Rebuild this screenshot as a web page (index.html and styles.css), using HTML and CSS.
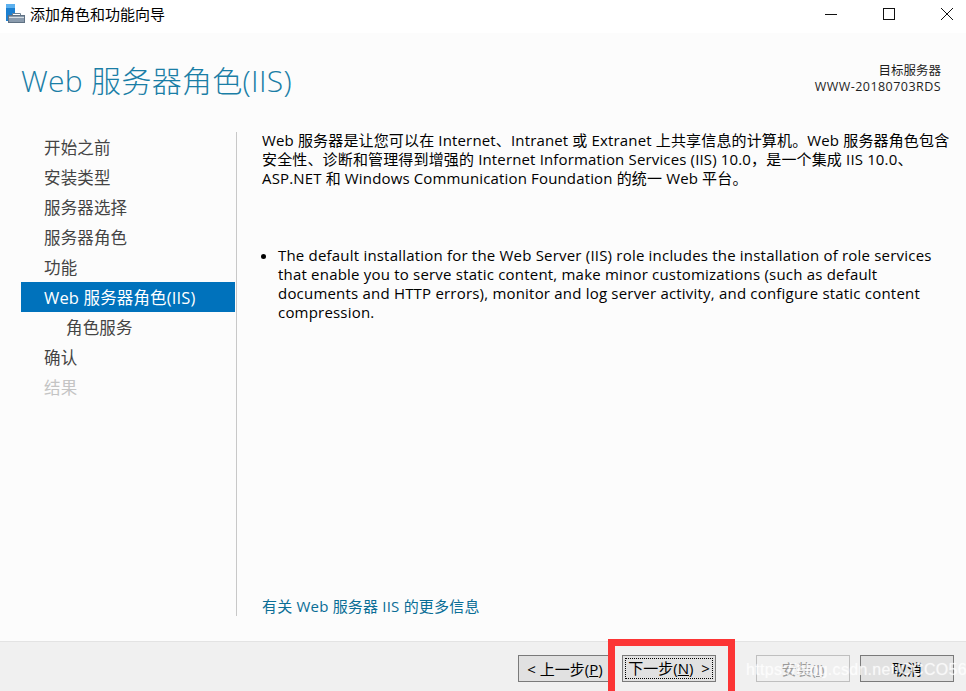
FILE: index.html
```html
<!DOCTYPE html>
<html lang="zh-CN">
<head>
    <meta charset="UTF-8">
    <title>添加角色和功能向导</title>
    <link rel="stylesheet" href="styles.css">
</head>
<body>
    <div class="window">
        <div class="titlebar">
            <svg class="app-icon" width="20" height="20" viewBox="0 0 20 20">
                <rect x="1" y="0" width="9" height="4" fill="#5cb0ee"/>
                <rect x="1" y="4" width="9" height="13" fill="#1b7fd0"/>
                <path d="M7.5 11.5v-2h8v2" fill="#ffffff" stroke="#6d8092"/>
                <rect x="3.5" y="11.5" width="16" height="7" fill="#8a9bad" stroke="#5f7183"/>
                <rect x="4" y="13" width="15" height="1" fill="#d5dce2"/>
            </svg>
            <span class="title-text">添加角色和功能向导</span>
            <div class="controls">
                <svg width="12" height="12" viewBox="0 0 12 12"><path d="M0 6.5h12" stroke="#111" fill="none"/></svg>
                <svg width="12" height="12" viewBox="0 0 12 12"><rect x="0.5" y="0.5" width="11" height="11" stroke="#111" fill="none"/></svg>
                <svg width="12" height="12" viewBox="0 0 12 12"><path d="M0 0L12 12M12 0L0 12" stroke="#111" fill="none"/></svg>
            </div>
        </div>

        <div class="header">
            <h1>Web 服务器角色(IIS)</h1>
            <div class="target">
                <div>目标服务器</div>
                <div class="server-name">WWW-20180703RDS</div>
            </div>
        </div>

        <div class="main">
            <ul class="nav">
                <li>开始之前</li>
                <li>安装类型</li>
                <li>服务器选择</li>
                <li>服务器角色</li>
                <li>功能</li>
                <li class="active">Web 服务器角色(IIS)</li>
                <li class="sub">角色服务</li>
                <li>确认</li>
                <li class="disabled">结果</li>
            </ul>
            <div class="content">
                <p class="intro">Web 服务器是让您可以在 Internet、Intranet 或 Extranet 上共享信息的计算机。Web 服务器角色包含安全性、诊断和管理得到增强的 Internet Information Services (IIS) 10.0，是一个集成 IIS 10.0、ASP.NET 和 Windows Communication Foundation 的统一 Web 平台。</p>
                <ul class="notes">
                    <li>The default installation for the Web Server (IIS) role includes the installation of role services that enable you to serve static content, make minor customizations (such as default documents and HTTP errors), monitor and log server activity, and configure static content compression.</li>
                </ul>
                <a class="more" href="#">有关 Web 服务器 IIS 的更多信息</a>
            </div>
        </div>

        <div class="footer">
            <button class="btn btn-prev">&lt; 上一步(<u>P</u>)</button>
            <button class="btn btn-next"><span class="focus">下一步(<u>N</u>) &nbsp;&gt;</span></button>
            <button class="btn btn-install" disabled>安装(<u>I</u>)</button>
            <button class="btn btn-cancel">取消</button>
        </div>
    </div>

    <div class="highlight"></div>
    <div class="watermark">https://blog.csdn.net/CCCO56</div>
</body>
</html>
```

FILE: styles.css
```css
:root {
    --accent: #0072bc;
    --heading: #1a7ea6;
    --link: #0a6e96;
    --text: #1e1e1e;
}

html, body {
    margin: 0;
    padding: 0;
}

body {
    width: 966px;
    height: 691px;
    overflow: hidden;
    position: relative;
    font-family: "Open Sans", "Noto Sans CJK SC", sans-serif;
    color: var(--text);
    background-color: #fcfcfc;
}

.window {
    display: flex;
    flex-direction: column;
    height: 691px;
}

.titlebar {
    height: 33px;
    background-color: #ffffff;
    display: flex;
    align-items: center;
    padding-left: 5px;
    flex-shrink: 0;
}

.app-icon {
    margin-top: -5px;
}

.title-text {
    font-size: 15px;
    margin-left: 5px;
    margin-top: -6px;
    color: #000000;
}

.controls {
    margin-left: auto;
    display: flex;
    gap: 46px;
    padding-right: 13px;
    margin-top: -6px;
}

.header {
    height: 97px;
    display: flex;
    justify-content: space-between;
    flex-shrink: 0;
}

h1 {
    margin: 28px 0 0 21px;
    font-size: 30px;
    line-height: 40px;
    font-weight: 300;
    letter-spacing: 0.3px;
    color: var(--heading);
}

.target {
    margin: 30px 25px 0 0;
    text-align: right;
    font-size: 12.5px;
    line-height: 16px;
}

.server-name {
    letter-spacing: 0.45px;
}

.main {
    flex: 1;
    display: flex;
    min-height: 0;
}

.nav {
    list-style: none;
    margin: 2px 0 25px 21px;
    padding: 0;
    width: 216px;
    border-right: 1px solid #c8c8c8;
    font-size: 16.5px;
    letter-spacing: 0.15px;
    box-sizing: border-box;
}

.nav li {
    height: 30px;
    line-height: 31px;
    padding-left: 23px;
    color: #444444;
}

.nav li.active {
    background-color: var(--accent);
    color: #ffffff;
    margin-right: 1px;
}

.nav li.sub {
    padding-left: 45px;
}

.nav li.disabled {
    color: #c4c4c4;
}

.content {
    flex: 1;
    padding: 1px 14px 25px 25px;
    display: flex;
    flex-direction: column;
    font-size: 15px;
    letter-spacing: 0.2px;
    line-height: 19px;
}

.intro {
    margin: 0;
    letter-spacing: 0.15px;
    color: #000000;
}

.notes {
    margin: 58px 15px 0 0;
    padding: 0 0 0 16px;
    color: #000000;
}

.more {
    margin-top: auto;
    color: var(--link);
    text-decoration: none;
}

.footer {
    height: 50px;
    flex-shrink: 0;
    background-color: #f0f0f0;
    border-top: 1px solid #e3e3e3;
    box-sizing: border-box;
    padding-top: 13px;
    display: flex;
    align-items: flex-start;
}

.btn {
    height: 27px;
    width: 94px;
    padding: 0;
    border: 1px solid #7a7a7a;
    background-color: #e1e1e1;
    font-family: inherit;
    font-size: 15px;
    color: #000000;
    box-sizing: border-box;
}

.btn-prev {
    margin-left: 518px;
}

.btn-next {
    margin-left: 10px;
    padding: 2px;
}

.focus {
    display: block;
    height: 100%;
    line-height: 19px;
    border: 1px dotted #000000;
    box-sizing: border-box;
}

.btn-install {
    margin-left: 40px;
    border-color: #bfbfbf;
    background-color: #f0f0f0;
    color: #9a9a9a;
}

.btn-cancel {
    margin-left: 10px;
}

.highlight {
    position: absolute;
    left: 608px;
    top: 639px;
    width: 113px;
    height: 45px;
    border: 7px solid #fc3535;
}

.watermark {
    position: absolute;
    left: 746px;
    top: 661px;
    font-family: "Liberation Sans", sans-serif;
    font-size: 16px;
    letter-spacing: 0.3px;
    color: rgba(255, 255, 255, 0.55);
    text-shadow: 0 0 1px rgba(255, 255, 255, 0.7);
    white-space: nowrap;
}
```
